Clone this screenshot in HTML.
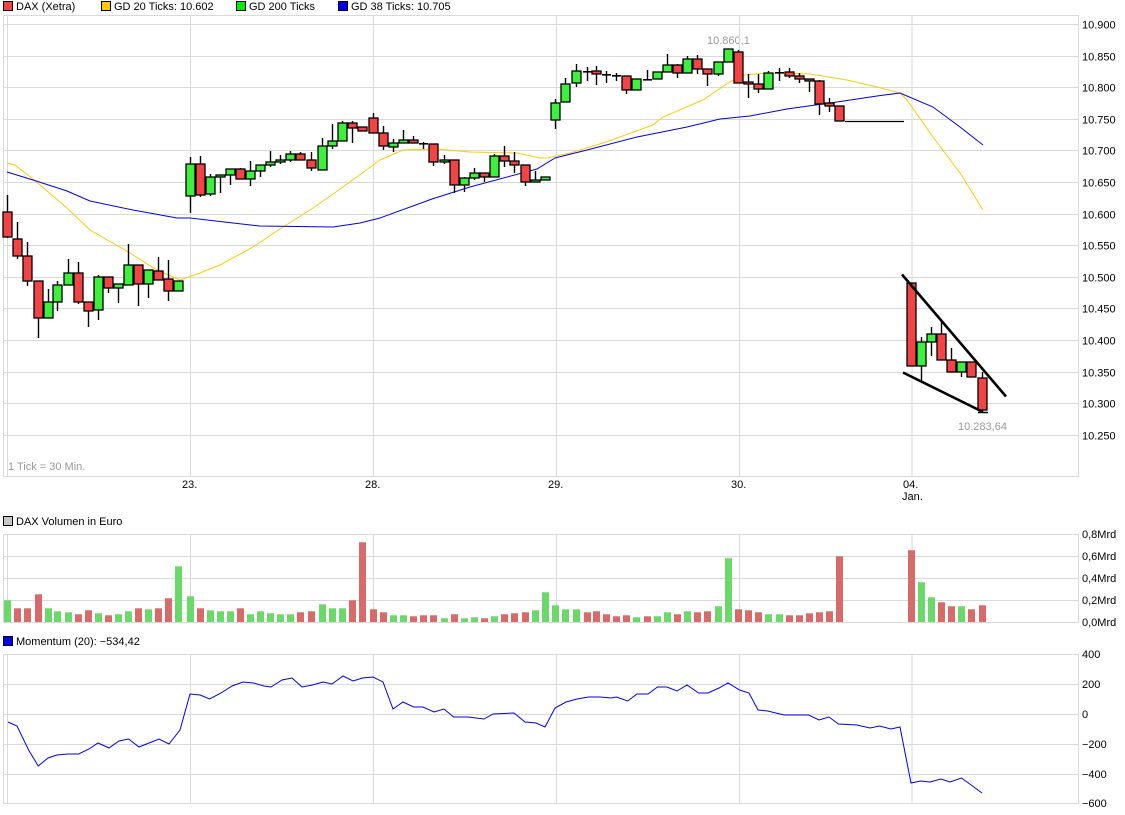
<!DOCTYPE html>
<html><head><meta charset="utf-8">
<style>
html,body{margin:0;padding:0;background:#fff;width:1125px;height:815px;overflow:hidden}
svg{display:block;font-family:"Liberation Sans",Arial,sans-serif;font-size:11px}
</style></head>
<body>
<svg id="s" width="1125" height="815" xmlns="http://www.w3.org/2000/svg">
<!-- legend -->
<rect x="3.5" y="1.5" width="9" height="9" fill="#f24444" stroke="#000"/>
<text x="16" y="10">DAX (Xetra)</text>
<rect x="101.5" y="1.5" width="9" height="9" fill="#ffcc00" stroke="#000"/>
<text x="114" y="10">GD 20 Ticks: 10.602</text>
<rect x="236.5" y="1.5" width="9" height="9" fill="#00ee00" stroke="#000"/>
<text x="249" y="10">GD 200 Ticks</text>
<rect x="338.5" y="1.5" width="9" height="9" fill="#0000ee" stroke="#000"/>
<text x="351" y="10">GD 38 Ticks: 10.705</text>
<rect x="3.5" y="516.5" width="9" height="9" fill="#c8c8c8" stroke="#000"/>
<text x="16" y="525">DAX Volumen in Euro</text>
<rect x="3.5" y="636.5" width="9" height="9" fill="#0000ee" stroke="#000"/>
<text x="16" y="645">Momentum (20): −534,42</text>
<text x="8" y="470" fill="#999">1 Tick = 30 Min.</text>
<text x="182" y="488">23.</text>
<text x="365" y="488">28.</text>
<text x="548" y="488">29.</text>
<text x="731" y="488">30.</text>
<text x="903" y="488">04.</text>
<text x="902" y="500">Jan.</text>
<text x="707" y="44" fill="#999">10.860,1</text>
<text x="958" y="430" fill="#999">10.283,64</text>
<g id="g"></g>
</svg>
<script>
var NS="http://www.w3.org/2000/svg",g=document.getElementById('g'),h='';
function L(x1,y1,x2,y2,c,w){h+='<line x1="'+x1+'" y1="'+y1+'" x2="'+x2+'" y2="'+y2+'" stroke="'+c+'" stroke-width="'+(w||1)+'"/>';}
function T(x,y,t){h+='<text x="'+x+'" y="'+y+'">'+t+'</text>';}
var gc="#d9d9d9",vx=[7,190,373,556,739,911.5];
// main panel
for(var k=0;k<14;k++){var y=Math.round(24+k*31.6)+0.5;L(3,y,1078,y,gc);var p=10900-k*50;T(1082,y+4,(p/1000).toFixed(3));}
vx.forEach(function(x){L(x+.5,15,x+.5,477,gc)});
h+='<rect x="3.5" y="15.5" width="1075" height="461" fill="none" stroke="'+gc+'"/>';
// volume panel
[534,556,578,600,622].forEach(function(y,i){L(3,y+.5,1078,y+.5,gc);T(1082,y+4,['0,8Mrd','0,6Mrd','0,4Mrd','0,2Mrd','0,0Mrd'][i]);});
vx.forEach(function(x){L(x+.5,534,x+.5,622,gc)});
h+='<rect x="3.5" y="534.5" width="1075" height="88" fill="none" stroke="'+gc+'"/>';
// momentum panel
[654,684,714,744,774,803].forEach(function(y,i){L(3,y+.5,1078,y+.5,gc);T(1082,y+4,['400','200','0','−200','−400','−600'][i]);});
vx.forEach(function(x){L(x+.5,654,x+.5,803,gc)});
h+='<rect x="3.5" y="654.5" width="1075" height="149" fill="none" stroke="'+gc+'"/>';
// MAs
function P(pts,c){h+='<polyline fill="none" stroke="'+c+'" stroke-width="1" points="'+pts.map(function(p){return p.join(',')}).join(' ')+'"/>';}
P([[7,163],[15,165],[33,179],[67,208],[90,230],[130,253],[157,270],[180,280],[200,273],[220,265],[253,247],[283,227],[310,210],[343,187],[380,160],[403,150],[437,149],[470,152],[517,153],[540,158],[547,158],[570,153],[603,143],[653,125],[663,117],[703,100],[728,83],[743,75],[770,73],[810,74],[847,80],[877,87],[900,93],[907,100],[933,137],[960,173],[983,210]],"#ffcc00");
P([[7,172],[33,180],[67,191],[90,201],[133,210],[177,218],[190,218],[233,223],[260,226],[333,227],[360,223],[380,218],[432,199],[470,187],[537,169],[555,158],[587,150],[637,137],[687,127],[720,119],[750,116],[787,109],[837,102],[877,96],[900,93],[933,107],[960,127],[983,145]],"#0000ee");
// candles
var C=[[7,'r',212,237,195,238],[17,'r',239,256,222,259],[27,'r',256,281,242,286],[37.5,'r',281,318,281,338],[47.5,'g',302,318,289,318],[57,'g',285,302,281,311],[67.5,'g',273,285,259,285],[77.5,'r',273,302,262,304],[87.5,'r',302,311,302,327],[97.5,'g',277,310,275,320],[107.5,'r',277,288,277,293],[117.5,'g',284,288,284,303],[128,'g',265,285,244,285],[138,'r',265,284,265,306],[148,'g',270,284,270,298],[158,'r',271,280,257,280],[168,'r',279,291,260,301],[178,'g',281,291,281,291],
[190,'g',164,196,157,213],[200,'r',164,195,156,197],[210,'g',177,194,174,196],[220,'g',175,177,175,193],[230,'g',169,175,169,185],[240,'r',169,179,168,179],[250,'g',171,179,161,186],[260,'g',165,171,165,177],[270,'g',162,165,151,167],[280,'g',160,162,155,164],[290,'g',154,160,151,162],[300,'r',154,160,152,160],[311,'r',160,168,152,171],[321.5,'g',146,170,138,170],[331.5,'g',141,146,124,149],[342,'g',123,141,121,141],[351.5,'r',123,128,121,143],[361.5,'r',127,131,127,131],
[372.5,'r',118,133,113,133],[383,'r',133,146,126,150],[393,'g',143,147,139,152],[403,'g',140,143,130,143],[413,'r',140,143,136,143],[423,'k',143,144,142,149],[433,'r',144,162,144,166],[444,'g',160,162,155,164],[454,'r',160,185,160,193],[464,'g',178,185,177,192],[474,'g',173,178,168,180],[484,'r',173,177,173,182],[494,'g',156,177,154,177],[504,'r',156,161,146,167],[514,'r',161,165,152,173],[525,'r',165,182,165,186],[535,'g',180,182,171,182],[545,'g',177,180,177,180],
[555,'g',103,120,99,129],[565,'g',84,102,78,102],[576,'g',71,83,64,87],[586.5,'k',71,72,67,81],[596,'r',71,74,66,85],[606,'k',74,75,71,83],[616,'k',75,76,73,81],[626,'r',76,90,76,94],[636,'g',79,90,79,90],[647,'k',79,80,70,80],[657,'g',72,79,72,79],[667,'g',65,72,54,72],[677,'r',65,73,64,78],[687,'g',59,73,56,73],[697,'r',59,69,55,74],[707,'r',69,74,69,86],[718,'g',62,74,62,76],[728,'g',49,62,49,62],
[738,'r',52,83,50,83],[748,'r',82,84,74,98],[758,'r',84,89,74,93],[768,'g',73,89,71,89],[779,'k',72,73,68,81],[789,'r',72,76,68,78],[799,'r',76,79,73,83],[809,'r',79,81,79,92],[819,'r',81,104,80,115],[829,'r',103,106,98,112],[839,'r',106,121,106,121],
[911,'r',283,366,283,366],[921,'g',342,366,337,382],[931,'g',334,342,327,356],[941,'r',334,360,322,360],[951,'r',360,372,348,372],[961,'g',362,372,362,377],[971,'r',362,377,362,377],[982,'r',378,410,372,413]];
var V="g21.7 r13.7 r13.7 r27.7 g13.7 g10.7 g9.7 r7.7 r11.7 g8.7 r6.7 g7.7 g10.7 r13.7 g12.7 r13.7 r23.7 g55.7 g25.7 r13.7 g11.7 g10.7 g10.7 r13.7 g7.7 g10.7 g8.7 g7.7 g7.7 r9.7 r10.7 g17.7 g13.7 g13.7 r21.7 r79.7 r12.7 r9.7 g6.7 g6.7 r5.7 r6.7 r6.7 g3.7 r7.7 g3.7 g4.7 r3.7 g5.7 r7.7 r8.7 r9.7 g11.7 g29.7 g16.7 g12.7 g12.7 r9.7 r10.7 r7.7 r5.7 r6.7 g4.7 r5.7 g5.7 g9.7 r7.7 g10.7 r9.7 r10.7 g15.7 g63.7 r12.7 r11.7 r9.7 g7.7 g7.7 r6.7 r6.7 r8.7 r9.7 r10.7 r65.7 r71.7 g39.7 g24.7 r19.7 r15.7 g15.7 r12.7 r16.7".split(' ');
C.forEach(function(c,i){
  var x=Math.round(c[0]);
  L(x+.5,c[4],x+.5,c[5],'#000',1.4);
  if(c[1]=='k'){h+='<rect x="'+(x-4)+'" y="'+c[2]+'" width="9" height="1.6" fill="#000"/>';}
  else{var bh=Math.max(c[3]-c[2],1.5);h+='<rect x="'+(x-4)+'" y="'+c[2]+'" width="9" height="'+bh+'" fill="'+(c[1]=='r'?'#f24444':'#3ef03e')+'" stroke="#000" stroke-width="1.3"/>';}
  var v=V[i];if(v){var vh=parseFloat(v.slice(1));h+='<rect x="'+(x-3)+'" y="'+(622-vh)+'" width="7" height="'+vh+'" fill="'+(v[0]=='r'?'#d96a6a':'#6ad96a')+'"/>';}
});
L(845,121.5,904,121.5,'#000',1.3);
L(902,274.5,1006,396.5,'#000',2.6);
L(903,372.5,982,411.5,'#000',2.6);
L(978,412.5,988,412.5,'#000',1.5);
// momentum
P([[8,722],[17,726],[28.6,750],[38.2,766],[48,758],[57,755],[68,754],[78.6,754],[89,749],[98,743],[109,748],[119,741],[128.6,739],[139,747],[149,743],[159,739],[169,744],[180,730],[190,694],[200,695],[209.6,699],[221,693],[232,686],[243,682],[253.6,683],[264,686],[271,687],[282,680],[292,678],[302,687],[312.5,685],[323,682],[332,684],[343,676],[353,681],[362.5,678],[373,677],[383,682],[393,709],[403,702],[413.6,707],[423,707],[434,712],[444,709],[453.6,717],[468,717],[484,719],[493,714],[514,713],[525,722],[536,723],[545,727],[555,708],[566,702],[577,699],[588.5,697],[600,697],[611,698],[616.5,697],[627.7,701],[637,694],[648,694],[657.5,687],[667,687],[677,691],[687,685],[698.6,693],[708,693],[719,688],[728,683],[739.6,690],[749,693],[758,710],[767.6,711],[784,715],[808.7,715],[819,720],[829,717],[838.5,724],[857,725],[870,728],[879.5,726],[891,729],[900,727],[911,783],[920.6,781],[930,782],[941,779],[950,782],[961.6,778],[982,793]],"#0000ee");
g.innerHTML=h;
</script>
</body></html>
